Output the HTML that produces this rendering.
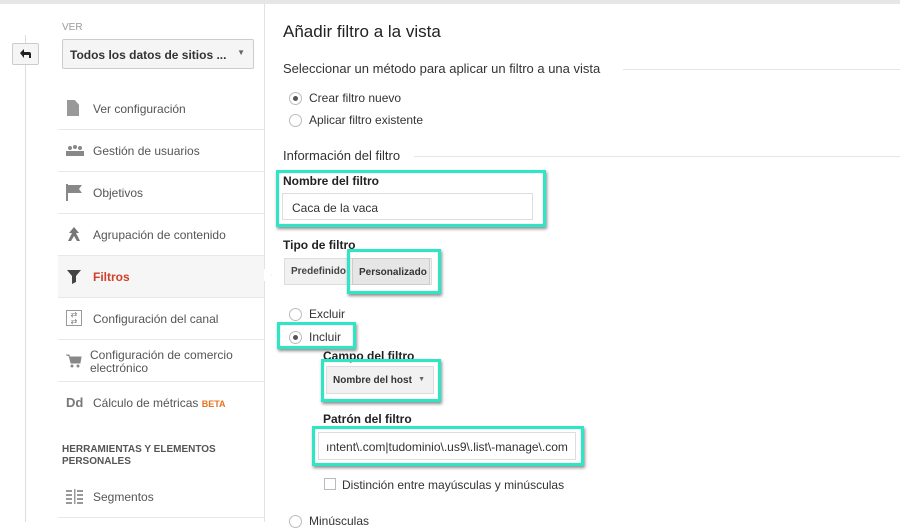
<!DOCTYPE html>
<html><head><meta charset="utf-8"><style>
*{margin:0;padding:0;box-sizing:border-box}
body{width:900px;height:522px;overflow:hidden;background:#fff;font-family:"Liberation Sans",Arial,sans-serif;color:#333;position:relative}
.a{position:absolute}
.nav{position:absolute;left:58px;width:206px;height:42px;border-bottom:1px solid #e8e8e8;font-size:12px;color:#555}
.nav .t{position:absolute;left:35px;top:14px}
.nav .i{position:absolute;left:8px;top:12px;width:16px;height:16px}
.teal{position:absolute;border:3px solid #2ee6c6;box-shadow:1px 2px 3px rgba(0,0,0,.45),inset 0 0 1px rgba(0,0,0,.3)}
.radio{position:absolute;width:13px;height:13px;border:1px solid #bbb;border-radius:50%;background:#fff}
.radio.on::after{content:"";position:absolute;left:3px;top:3px;width:5px;height:5px;border-radius:50%;background:#555}
.lbl{position:absolute;font-size:12px;color:#333}
.b{font-weight:bold;font-size:12px;color:#222}
</style></head><body>
<div class="a" style="left:0;top:0;width:900px;height:4px;background:#e6e6e6"></div>
<div class="a" style="left:25px;top:35px;width:1px;height:487px;background:#ddd"></div>
<div class="a" style="left:264px;top:4px;width:1px;height:518px;background:#e2e2e2"></div>
<div class="a" style="left:12px;top:43px;width:27px;height:22px;border:1px solid #ccc;border-radius:2px;background:#f5f5f5"><svg width="25" height="20"><path d="M7 9l4-4v3h5a2 2 0 0 1 2 2v4h-2v-3h-5v3z" fill="#222"/></svg></div>
<div class="a" style="left:62px;top:22px;font-size:10px;color:#999">VER</div>
<div class="a" style="left:62px;top:39px;width:192px;height:30px;border:1px solid #ccc;border-radius:2px;background:#f5f5f5;font-size:12px;font-weight:bold;color:#333;padding:8px 0 0 7px">Todos los datos de sitios ...<span style="position:absolute;right:8px;top:8px;font-size:8px;color:#666">▼</span></div>

<div class="nav" style="top:88px"><div class="i" style="left:9px;width:12px;background:#999;clip-path:polygon(0 0,65% 0,100% 30%,100% 100%,0 100%)"></div><span class="t">Ver configuración</span></div>
<div class="nav" style="top:130px"><div class="i" style="top:15px;height:10px;color:#888"><svg width="18" height="11"><circle cx="4" cy="3" r="2" fill="#888"/><circle cx="9" cy="2" r="2" fill="#888"/><circle cx="14" cy="3" r="2" fill="#888"/><rect x="0" y="6" width="18" height="5" fill="#888"/></svg></div><span class="t">Gestión de usuarios</span></div>
<div class="nav" style="top:172px"><div class="i"><svg width="18" height="17"><rect x="0" y="0" width="2" height="17" fill="#888"/><path d="M2 1h14l-3 4 3 4H2z" fill="#888"/></svg></div><span class="t">Objetivos</span></div>
<div class="nav" style="top:214px"><div class="i"><svg width="16" height="16"><path d="M8 1l-5 6h3l-4 8h3l3-5 3 5h3l-4-8h3z" fill="#777"/></svg></div><span class="t">Agrupación de contenido</span></div>
<div class="nav" style="top:256px;background:#f6f6f6"><div class="i"><svg width="16" height="16"><path d="M1 2h14l-5 6v6l-4 2v-8z" fill="#444"/></svg></div><span class="t" style="color:#d0402b;font-weight:bold">Filtros</span></div>
<div class="nav" style="top:298px"><div class="i" style="border:1px solid #999;width:16px;height:16px;font-size:8px;line-height:7px;color:#777;text-align:center">⇄<br>⇄</div><span class="t">Configuración del canal</span></div>
<div class="nav" style="top:340px"><div class="i" style="top:14px"><svg width="16" height="14"><path d="M0 1h3l2 8h9l1-6H4" fill="#888" stroke="#888"/><circle cx="6" cy="12" r="1.5" fill="#888"/><circle cx="12" cy="12" r="1.5" fill="#888"/></svg></div><span class="t" style="left:32px;top:9px;line-height:13px">Configuración de comercio<br>electrónico</span></div>
<div class="nav" style="top:382px;border:none"><div class="i" style="font-weight:bold;font-size:13px;color:#777;top:13px;width:auto">Dd</div><span class="t">Cálculo de métricas <span style="color:#e8711c;font-size:9px;font-weight:bold">BETA</span></span></div>
<div class="a" style="left:62px;top:444px;font-size:10px;font-weight:bold;color:#555;line-height:12px">HERRAMIENTAS Y ELEMENTOS<br>PERSONALES</div>
<div class="nav" style="top:476px"><div class="i" style="top:13px"><svg width="18" height="15"><g fill="#999"><rect x="0" y="1" width="6" height="2"/><rect x="0" y="5" width="6" height="2"/><rect x="0" y="9" width="6" height="2"/><rect x="0" y="13" width="6" height="2"/><rect x="8" y="0" width="1.5" height="15"/><rect x="11" y="1" width="6" height="2"/><rect x="11" y="5" width="6" height="2"/><rect x="11" y="9" width="6" height="2"/><rect x="11" y="13" width="6" height="2"/></g></svg></div><span class="t" style="top:14px">Segmentos</span></div>
<div class="a" style="left:264px;top:268px;width:8px;height:14px;border:1px solid #e2e2e2;border-left:none;clip-path:polygon(0 0,100% 50%,0 100%);background:#fff"></div>

<div class="a" style="left:283px;top:22px;font-size:17px;color:#222">Añadir filtro a la vista</div>
<div class="a" style="left:283px;top:61px;font-size:13px;color:#333">Seleccionar un método para aplicar un filtro a una vista</div>
<div class="a" style="left:623px;top:69px;width:277px;height:1px;background:#e5e5e5"></div>
<div class="radio on" style="left:289px;top:92px"></div><div class="lbl" style="left:309px;top:91px">Crear filtro nuevo</div>
<div class="radio" style="left:289px;top:114px"></div><div class="lbl" style="left:309px;top:113px">Aplicar filtro existente</div>
<div class="a" style="left:283px;top:148px;font-size:13px;color:#333">Información del filtro</div>
<div class="a" style="left:414px;top:156px;width:486px;height:1px;background:#e5e5e5"></div>

<div class="a b" style="left:283px;top:174px">Nombre del filtro</div>
<div class="a" style="left:282px;top:193px;width:251px;height:27px;border:1px solid #ddd;font-size:12px;padding:7px 0 0 9px;color:#333">Caca de la vaca</div>
<div class="teal" style="left:276px;top:170px;width:270px;height:57px"></div>

<div class="a b" style="left:283px;top:238px">Tipo de filtro</div>
<div class="a" style="left:284px;top:258px;width:148px;height:27px;background:#f1f1f1;border:1px solid #ddd"></div>
<div class="a" style="left:291px;top:266px;font-size:10px;font-weight:bold;color:#444">Predefinido</div>
<div class="a" style="left:352px;top:258px;width:78px;height:27px;background:#e6e6e6;border:1px solid #ccc;font-size:10px;font-weight:bold;color:#333;padding:8px 0 0 6px">Personalizado</div>
<div class="teal" style="left:347px;top:249px;width:94px;height:45px"></div>

<div class="radio" style="left:289px;top:308px"></div><div class="lbl" style="left:309px;top:307px">Excluir</div>
<div class="radio on" style="left:289px;top:331px"></div><div class="lbl" style="left:309px;top:330px">Incluir</div>
<div class="teal" style="left:277px;top:322px;width:79px;height:27px"></div>

<div class="a b" style="left:323px;top:349px">Campo del filtro</div>
<div class="a" style="left:326px;top:366px;width:108px;height:28px;background:#f1f1f1;border:1px solid #ddd;font-size:10px;font-weight:bold;color:#333;padding:8px 0 0 6px">Nombre del host<span style="position:absolute;right:8px;top:9px;font-size:7px;color:#666">▼</span></div>
<div class="teal" style="left:321px;top:359px;width:120px;height:43px"></div>

<div class="a b" style="left:323px;top:412px">Patrón del filtro</div>
<div class="a" style="left:318px;top:432px;width:258px;height:28px;border:1px solid #ddd;font-size:12px;padding:7px 0 0 7px;color:#333;overflow:hidden;white-space:nowrap">ıntent\.com|tudominio\.us9\.list\-manage\.com</div>
<div class="teal" style="left:312px;top:426px;width:272px;height:40px"></div>

<div class="a" style="left:324px;top:478px;width:12px;height:12px;border:1px solid #bbb;background:#fff"></div>
<div class="lbl" style="left:342px;top:478px">Distinción entre mayúsculas y minúsculas</div>
<div class="radio" style="left:289px;top:515px"></div><div class="lbl" style="left:309px;top:514px">Minúsculas</div>
</body></html>
